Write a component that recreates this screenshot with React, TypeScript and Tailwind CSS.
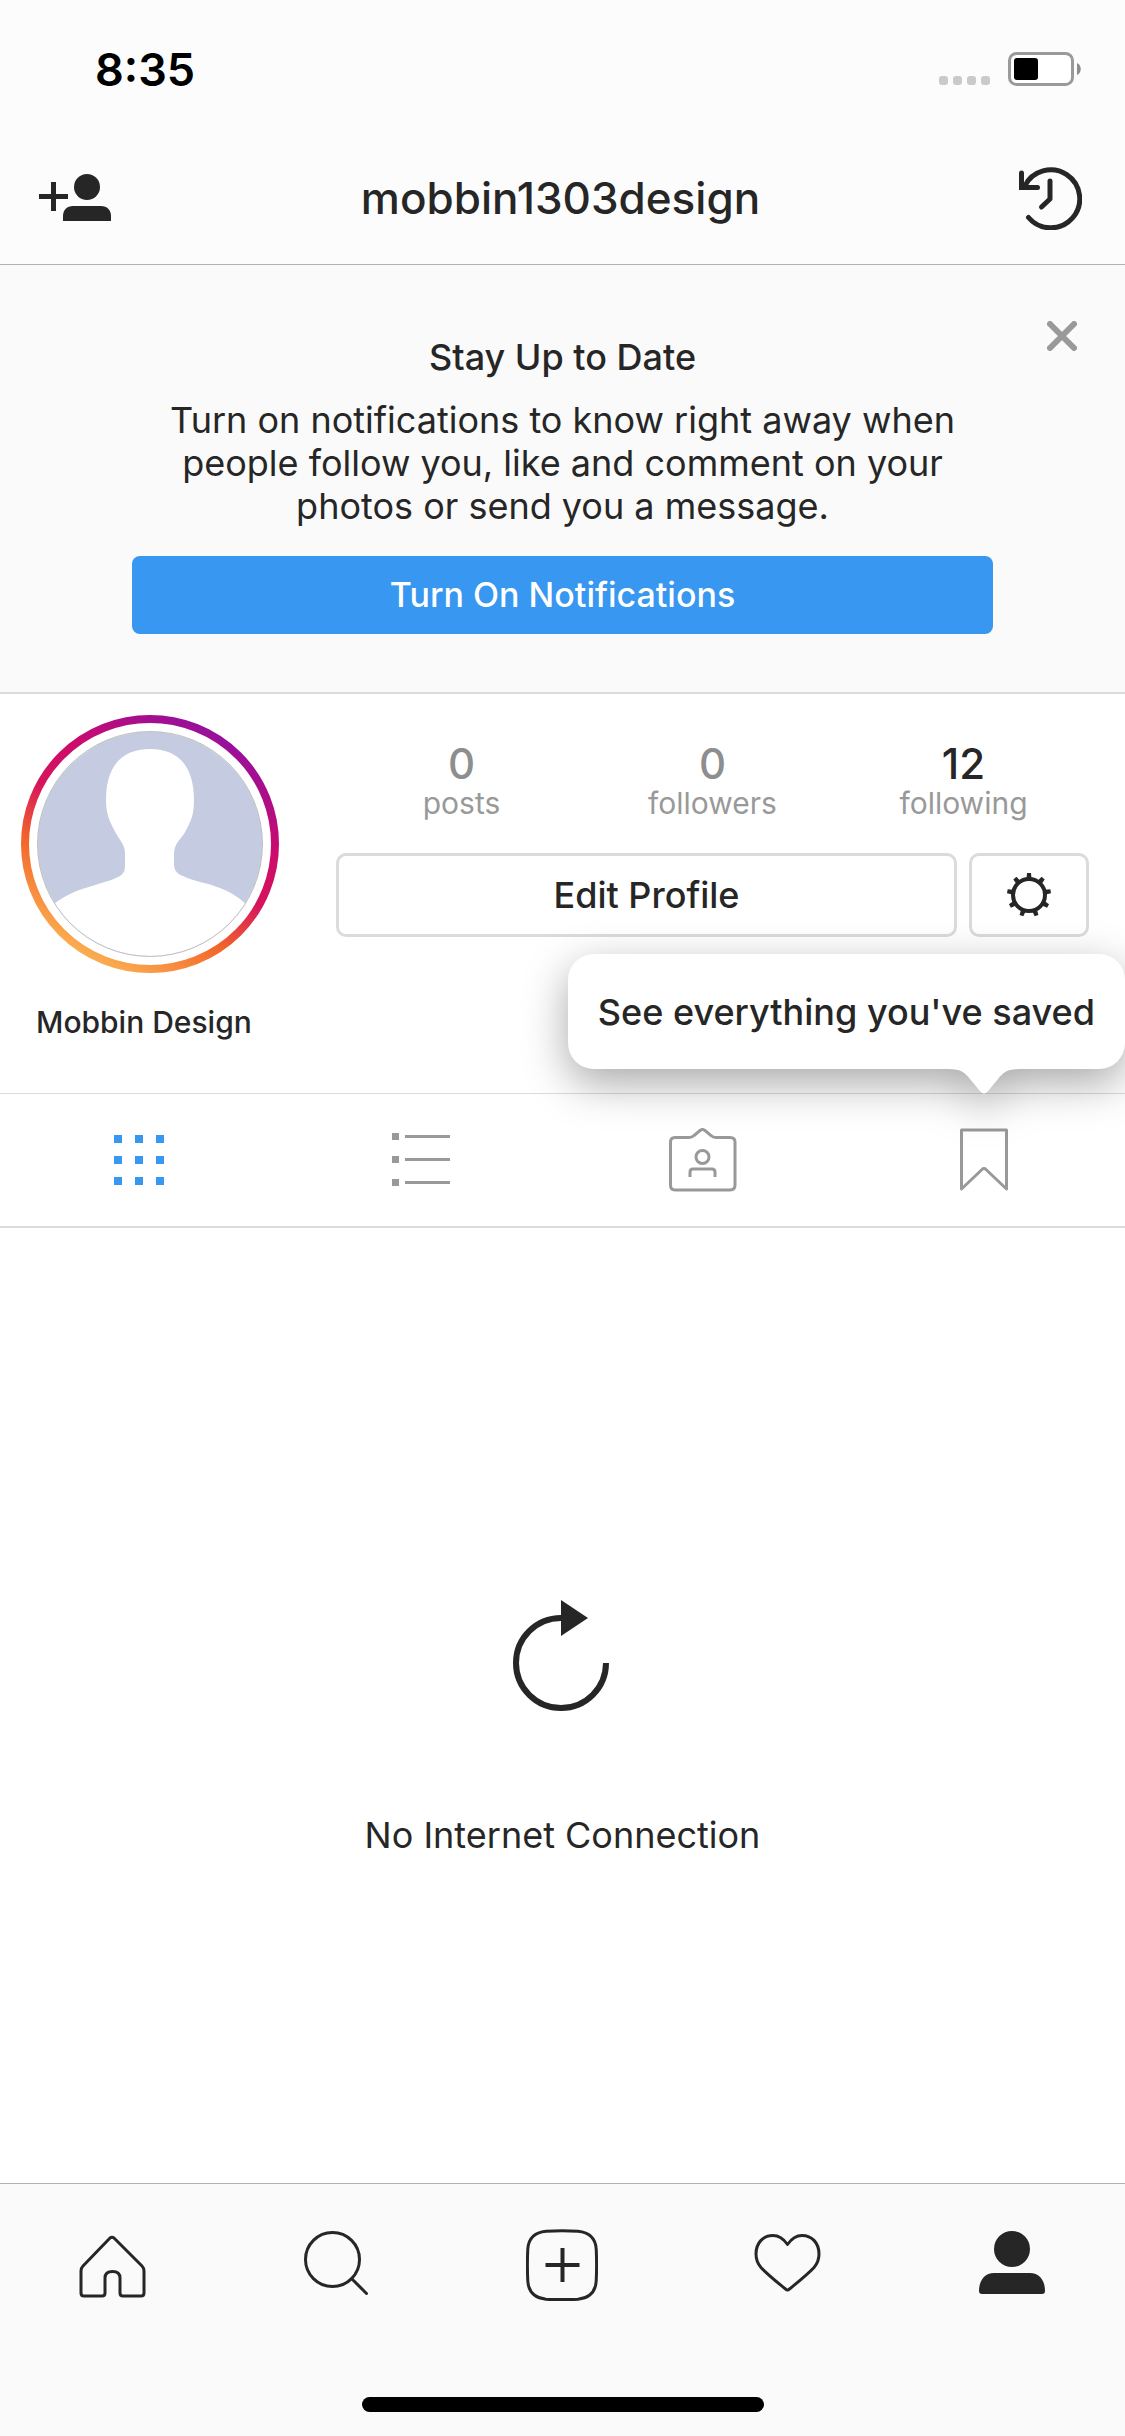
import type { ReactNode } from "react"

const stats = [
  { value: "0", label: "posts", muted: true },
  { value: "0", label: "followers", muted: true },
  { value: "12", label: "following", muted: false },
]

function StatusBar() {
  return (
    <div className="flex h-[132px] items-center justify-between pt-1.5 pr-11 pl-[95px]">
      <span className="text-[45px] leading-none font-semibold text-black">8:35</span>
      <div className="flex items-end gap-[18px]">
        <div className="flex gap-1 pb-px">
          <span className="size-[9px] rounded-[3px] bg-[#cacaca]" />
          <span className="ml-px size-[9px] rounded-[3px] bg-[#cacaca]" />
          <span className="ml-px size-[9px] rounded-[3px] bg-[#cacaca]" />
          <span className="ml-px size-[9px] rounded-[3px] bg-[#cacaca]" />
        </div>
        <svg width="73" height="34" viewBox="0 0 73 34" aria-hidden="true">
          <rect x="1.5" y="1.5" width="63" height="31" rx="7" fill="#fff" stroke="#9a9a9a" strokeWidth="3" />
          <rect x="6" y="6" width="24" height="22" rx="3" fill="#000" />
          <path d="M69 11c5 2 5 10 0 12z" fill="#8c8c8c" />
        </svg>
      </div>
    </div>
  )
}

function Header() {
  return (
    <header className="border-b border-[#b2b2b2] bg-[#fcfcfc]">
      <StatusBar />
      <div className="grid h-[132px] grid-cols-[1fr_auto_1fr] items-center pr-[43px] pl-[39px]">
        <button type="button" aria-label="Discover people" className="justify-self-start">
          <svg width="72" height="64" viewBox="0 0 72 64" fill="#262626">
            <path d="M12 16h5v12h12v5H17v12h-5V33H0v-5h12z" />
            <circle cx="48" cy="21" r="13" />
            <path d="M24 55v-5c0-6 4-10 10-10h28c6 0 10 4 10 10v5z" />
          </svg>
        </button>
        <h1 className="text-[44px] leading-none font-medium">mobbin1303design</h1>
        <button type="button" aria-label="Archive" className="justify-self-end">
          <svg
            width="64"
            height="64"
            viewBox="0 0 64 64"
            fill="none"
            stroke="#262626"
            strokeWidth="5"
            strokeLinecap="round"
            strokeLinejoin="round"
          >
            <path d="M6.500 20.500A29 29 0 1 1 10.500 51.500" />
            <path d="M3.500 7v14.500H19.500" strokeLinejoin="miter" />
            <path d="M32 15v18l-8.500 8" />
          </svg>
        </button>
      </div>
    </header>
  )
}

function NotificationBanner() {
  return (
    <section className="relative flex flex-col items-center border-b-2 border-[#dbdbdb] bg-[#fafafa] px-[132px] pt-[70px] pb-[58px] text-center">
      <button type="button" aria-label="Dismiss" className="absolute top-[56px] right-[48px]">
        <svg width="30" height="30" viewBox="0 0 30 30" stroke="#999" strokeWidth="6" strokeLinecap="round">
          <path d="M3 3l24 24M27 3L3 27" />
        </svg>
      </button>
      <h2 className="text-[36px] leading-[44px] font-medium">Stay Up to Date</h2>
      <p className="mt-5 max-w-[800px] text-[36px] leading-[43px]">
        Turn on notifications to know right away when people follow you, like and comment on your photos or send
        you a message.
      </p>
      <button
        type="button"
        className="mt-7 h-[78px] w-full rounded-lg bg-[#3897f0] text-[34px] leading-none font-medium text-white"
      >
        Turn On Notifications
      </button>
    </section>
  )
}

function Avatar() {
  return (
    <svg width="258" height="258" viewBox="0 0 258 258" role="img" aria-label="Profile photo">
      <defs>
        <linearGradient id="ring" x1="0.25" y1="0.95" x2="0.75" y2="0.05">
          <stop offset="0" stopColor="#fbad50" />
          <stop offset="0.28" stopColor="#f2652a" />
          <stop offset="0.5" stopColor="#d6145c" />
          <stop offset="0.7" stopColor="#cc0b6c" />
          <stop offset="1" stopColor="#97109b" />
        </linearGradient>
        <clipPath id="photo">
          <circle cx="129" cy="129" r="112" />
        </clipPath>
      </defs>
      <circle cx="129" cy="129" r="125" fill="#fff" stroke="url(#ring)" strokeWidth="8" />
      <g clipPath="url(#photo)">
        <rect width="258" height="258" fill="#c5cbe0" />
        <path
          d="M129 34C158 34 173 52 173 85C173 98 171 105 163 119C157 127 153 130 153 140V149C153 155 156 159 162 161C174 167 184 167 196 172C208 176 216 181 225 189V258H33V189C38 185 44 181 51 178C66 171 86 168 99 161C103 158 104 156 104 150V139C104 131 101 128 96 120C88 106 85 98 85 85C85 52 100 34 129 34Z"
          fill="#fff"
        />
      </g>
      <circle cx="129" cy="129" r="112.500" fill="none" stroke="#000" strokeOpacity="0.25" />
    </svg>
  )
}

function GearIcon() {
  const teeth = [0, 40, 80, 120, 160, 200, 240, 280, 320]
  return (
    <svg width="46" height="46" viewBox="0 0 46 46" fill="#262626" aria-hidden="true">
      <circle cx="23" cy="23" r="16" fill="none" stroke="#262626" strokeWidth="4" />
      {teeth.map((angle) => (
        <path key={angle} d="M20.500 6.500l.5-5.500h4l.5 5.500z" transform={`rotate(${angle} 23 23)`} />
      ))}
    </svg>
  )
}

function Profile() {
  return (
    <section className="pt-[21px] pr-9 pl-[21px]">
      <div className="flex gap-[57px]">
        <Avatar />
        <div className="flex-1 pt-[28px]">
          <dl className="grid grid-cols-3">
            {stats.map((stat) => (
              <div key={stat.label} className="flex flex-col-reverse items-center">
                <dt className="text-[30px] leading-[36px] text-[#999]">{stat.label}</dt>
                <dd
                  className={
                    stat.muted
                      ? "text-[42px] leading-[42px] font-medium text-[#8e8e8e]"
                      : "text-[42px] leading-[42px] font-medium"
                  }
                >
                  {stat.value}
                </dd>
              </div>
            ))}
          </dl>
          <div className="mt-8 flex gap-3">
            <button
              type="button"
              className="h-[84px] flex-1 rounded-[10px] border-[3px] border-[#dbdbdb] text-[36px] leading-none font-medium"
            >
              Edit Profile
            </button>
            <button
              type="button"
              aria-label="Settings"
              className="flex h-[84px] w-[120px] items-center justify-center rounded-[10px] border-[3px] border-[#dbdbdb]"
            >
              <GearIcon />
            </button>
          </div>
        </div>
      </div>
      <p className="mt-[31px] mb-[53px] ml-[15px] text-[30px] leading-[36px] font-medium">Mobbin Design</p>
    </section>
  )
}

function SavedTooltip() {
  return (
    <div
      role="tooltip"
      className="absolute right-0 bottom-full mb-[25px] flex h-[115px] items-center rounded-[26px] bg-white px-[30px] text-[36px] font-medium whitespace-nowrap drop-shadow-[0_14px_22px_rgba(0,0,0,0.34)]"
    >
      See everything you've saved
      <svg width="72" height="25" viewBox="0 0 72 25" className="absolute top-full right-[105px]" aria-hidden="true">
        <path d="M0 0C14 0 17 4 22 10L32 22Q36 27 40 22L50 10C55 4 58 0 72 0Z" fill="#fff" />
      </svg>
    </div>
  )
}

function Tab({ label, children }: { label: string; children: ReactNode }) {
  return (
    <button type="button" aria-label={label} className="flex h-[132px] items-center justify-center">
      {children}
    </button>
  )
}

function Tabs() {
  const dots = [0, 21, 42]
  return (
    <nav className="relative grid grid-cols-4 border-t border-b-2 border-[#dbdbdb]">
      <Tab label="Grid">
        <svg width="53" height="50" viewBox="0 0 53 50" fill="#3897f0">
          {dots.map((y) => dots.map((x) => <rect key={`${x}-${y}`} x={x} y={y} width="8" height="8" />))}
        </svg>
      </Tab>
      <Tab label="List">
        <svg width="60" height="54" viewBox="0 0 60 54" fill="#999">
          <path d="M0 0h7v7H0zM0 23h7v7H0zM0 46h7v7H0zM13 2h45v3H13zM13 25h45v3H13zM13 48h45v3H13z" />
        </svg>
      </Tab>
      <Tab label="Tagged">
        <svg width="68" height="64" viewBox="0 0 68 64" fill="none" stroke="#999" strokeWidth="3">
          <path d="M6 9.500H20Q23 9.500 25 7.500L31 2.500Q33.500 .5 36 2.500L42 7.500Q44 9.500 47 9.500H61Q66 9.500 66 14V57Q66 62 61 62H6Q1.500 62 1.500 57V14Q1.500 9.500 6 9.500Z" />
          <circle cx="33.500" cy="29" r="6.500" />
          <path d="M21 49V44Q21 41 24 41H43Q46 41 46 44V49" />
        </svg>
      </Tab>
      <Tab label="Saved">
        <svg width="48" height="64" viewBox="0 0 48 64" fill="none" stroke="#999" strokeWidth="3" strokeLinejoin="round">
          <path d="M1.500 2H46.500V61L26 41.500Q24 39.500 22 41.500L1.500 61Z" />
        </svg>
      </Tab>
      <SavedTooltip />
    </nav>
  )
}

function Offline() {
  return (
    <main className="flex flex-1 flex-col items-center pt-[372px]">
      <button type="button" aria-label="Retry">
        <svg width="101" height="112" viewBox="0 0 101 112">
          <path d="M49 18A45 45 0 1 0 94 63" fill="none" stroke="#262626" strokeWidth="6" />
          <path d="M49 0L76 18L49 36Z" fill="#262626" />
        </svg>
      </button>
      <p className="mt-[102px] text-[36px] leading-[43px]">No Internet Connection</p>
    </main>
  )
}

function NavLink({ label, children }: { label: string; children: ReactNode }) {
  return (
    <a href="#" aria-label={label} className="flex h-[162px] items-center justify-center pr-0.5">
      <svg
        width="72"
        height="72"
        viewBox="0 0 72 72"
        fill="none"
        stroke="#262626"
        strokeWidth="3"
        strokeLinecap="round"
        strokeLinejoin="round"
      >
        {children}
      </svg>
    </a>
  )
}

function BottomNav() {
  return (
    <footer className="border-t border-[#b2b2b2] bg-[#fafafa]">
      <nav className="grid grid-cols-5">
        <NavLink label="Home">
          <path d="M34 9Q36 7.500 38 9L66 37Q68 39 68 42V64Q68 67 65 67H47Q44 67 44 64V49Q44 42.500 36.500 42.500Q29 42.500 29 49V64Q29 67 26 67H8Q5 67 5 64V42Q5 39 7 37Z" />
        </NavLink>
        <NavLink label="Search">
          <circle cx="31.500" cy="30.500" r="27" />
          <path d="M51 50L65.500 64.500" />
        </NavLink>
        <NavLink label="New post">
          <path d="M20 2.300Q36 1 52 2.300C64 3.500 69.500 10 70.200 20Q71 36 70.200 52C69.500 63 64 69 52 70.200Q36 71 20 70.200C8 69 2.500 63 1.800 52Q1 36 1.800 20C2.500 10 8 3.500 20 2.300Z" />
          <path d="M36.500 19V53M19.500 36H53.500" strokeWidth="4" strokeLinecap="butt" />
        </NavLink>
        <NavLink label="Activity">
          <path d="M36.500 15.500C32 9 27 6.500 22 6.500C12 6.500 5 14 5 25C5 31 7 35 10 38.500C17 46 26 53 34.500 60Q36.500 62 38.500 60C47 53 56 46 63 38.500C66 35 68 31 68 25C68 14 61 6.500 51 6.500C46 6.500 41 9 36.500 15.500Z" />
        </NavLink>
        <NavLink label="Profile">
          <g fill="#262626" stroke="none">
            <circle cx="36" cy="20" r="18" />
            <path d="M3 62C3 51 9 44 18 44H54C63 44 69 51 69 62Q69 65 66 65H6Q3 65 3 62Z" />
          </g>
        </NavLink>
      </nav>
      <div className="mx-auto mt-[51px] mb-6 h-[15px] w-[402px] rounded-full bg-black" />
    </footer>
  )
}

export default function App() {
  return (
    <div className="flex min-h-screen flex-col bg-white font-['Inter','Liberation_Sans',sans-serif] text-[#262626]">
      <Header />
      <NotificationBanner />
      <Profile />
      <Tabs />
      <Offline />
      <BottomNav />
    </div>
  )
}
